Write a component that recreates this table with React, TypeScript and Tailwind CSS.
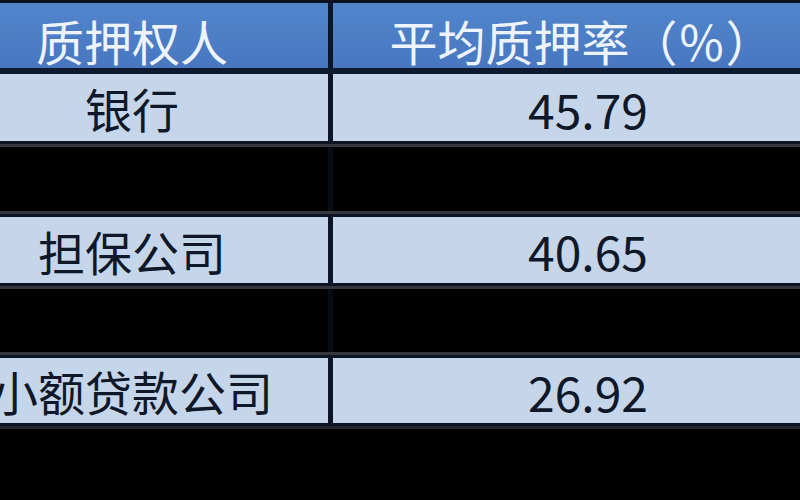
const rows = [
  { name: "银行", rate: "45.79", h: "h-[67px]" },
  { name: "担保公司", rate: "40.65", h: "h-[66px]" },
  { name: "小额贷款公司", rate: "26.92", h: "h-[65px]" },
];

function Separator({ h }: { h: string }) {
  return (
    <div className={`flex flex-col ${h}`}>
      <div className="h-[3px] bg-[#0d1524]" />
      <div className="h-[3px] bg-[#35373c]" />
      <div className="flex flex-1 bg-black">
        <div className="w-[328px]" />
        <div className="w-[5px] bg-[#070b14]" />
      </div>
      <div className="h-[3px] bg-[#35373c]" />
      <div className="h-[3px] bg-[#0d1524]" />
    </div>
  );
}

function Row({ name, rate, h }: { name: string; rate: string; h: string }) {
  return (
    <div className={`flex ${h} bg-[#c5d5ea] text-[#0f1828] leading-none`}>
      <div className="flex w-[328px] items-center text-[47px]">
        <div className="flex w-[264px] justify-center whitespace-nowrap">{name}</div>
      </div>
      <div className="w-[5px] bg-[#0b1628]" />
      <div className="flex flex-1 items-center justify-center pl-[43px] text-[48px]">{rate}</div>
    </div>
  );
}

export default function App() {
  return (
    <div
      className="flex h-[500px] w-[800px] flex-col overflow-hidden bg-black"
      style={{ fontFamily: '"Noto Sans CJK SC", "Noto Sans", sans-serif' }}
    >
      <div className="h-[3px] bg-[#0b1322]" />
      <div className="flex h-[65px] bg-gradient-to-b from-[#5185cc] to-[#4877c0] text-[48px] leading-none text-[#eef4ff]">
        <div className="flex w-[328px] items-center pt-[9px]">
          <div className="flex w-[264px] justify-center whitespace-nowrap">质押权人</div>
        </div>
        <div className="w-[5px] bg-[#0b1628]" />
        <div className="flex flex-1 items-center justify-center whitespace-nowrap pt-[9px] pl-[30px]">
          平均质押率（％）
        </div>
      </div>
      <div className="h-[6px] bg-[#0d1a30]" />
      <Row {...rows[0]} />
      <Separator h="h-[76px]" />
      <Row {...rows[1]} />
      <Separator h="h-[75px]" />
      <Row {...rows[2]} />
      <div className="h-[3px] bg-[#0d1524]" />
      <div className="h-[3px] bg-[#25272b]" />
      <div className="flex-1 bg-black" />
    </div>
  );
}
